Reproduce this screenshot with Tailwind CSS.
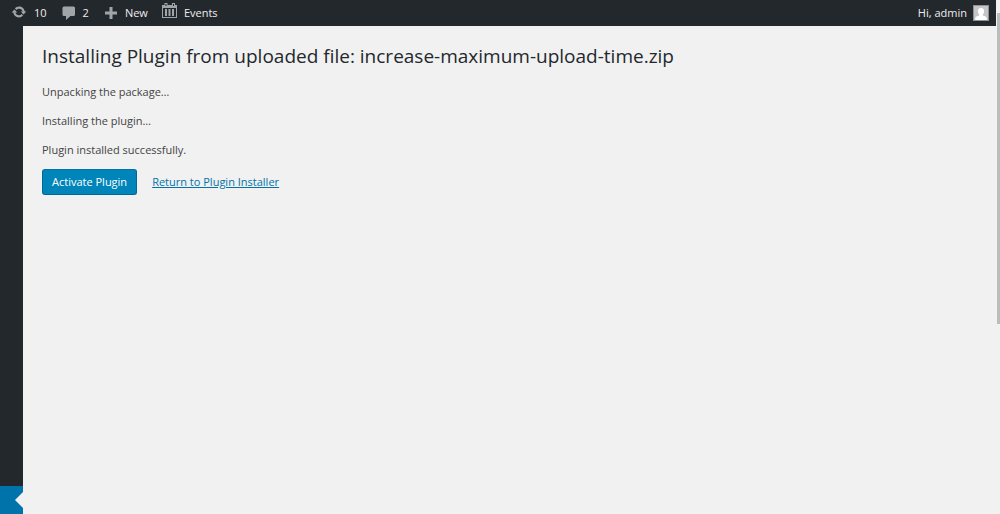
<!DOCTYPE html>
<html lang="en">
<head>
<meta charset="utf-8">
<title>Install Plugin</title>
<script src="https://cdn.jsdelivr.net/npm/@tailwindcss/browser@4"></script>
</head>
<body class="flex h-screen overflow-hidden bg-[#f1f1f1] font-['Open_Sans','Noto_Sans',sans-serif] text-[11px] text-[#444]">
<div class="flex min-w-0 flex-1 flex-col">
  <header class="flex h-[26px] shrink-0 items-center justify-between bg-[#23282d] pr-[7px] pl-[11px] text-[#eee]">
    <nav class="flex items-center gap-[14px]" aria-label="Toolbar">
      <a href="#" class="flex items-center gap-[7px]">
        <svg class="mb-0.5 h-4 w-4" viewBox="0 0 20 20" fill="#a0a5aa" aria-hidden="true">
          <path d="M10.200 3.280c3.530 0 6.430 2.610 6.920 6h2.080l-3.500 4-3.500-4h2.320c-.45-1.970-2.210-3.450-4.320-3.450-1.450 0-2.730.71-3.540 1.780L4.950 5.660C6.230 4.200 8.110 3.280 10.200 3.280zM9.800 16.720c-3.520 0-6.430-2.610-6.920-6H.8l3.500-4 3.500 4H5.480c.45 1.970 2.210 3.450 4.320 3.450 1.450 0 2.730-.71 3.540-1.780l1.710 1.950c-1.280 1.460-3.150 2.380-5.250 2.380z"/>
        </svg>
        <span>10</span>
      </a>
      <a href="#" class="flex items-center gap-1.5">
        <svg class="h-4 w-4" viewBox="0 0 16 16" fill="#a0a5aa" aria-hidden="true"><path d="M3 1.500h9.500A1.500 1.500 0 0 1 14 3v6.500a1.500 1.500 0 0 1-1.500 1.500H9.500L5 15v-4H3a1.500 1.500 0 0 1-1.500-1.500V3A1.500 1.500 0 0 1 3 1.500z"/></svg>
        <span>2</span>
      </a>
      <a href="#" class="flex items-center gap-2">
        <svg class="ml-0.5 h-3 w-3" viewBox="0 0 12 12" fill="#a0a5aa" aria-hidden="true"><path d="M4.500 0h3v4.500H12v3H7.500V12h-3V7.500H0v-3h4.500z"/></svg>
        <span>New</span>
      </a>
      <a href="#" class="flex items-center gap-1.5">
        <svg class="mb-1.5 h-4 w-4" viewBox="0 0 16 16" aria-hidden="true">
          <path fill="#a0a5aa" d="M0 3h2.500V1h3v2h4.500V1h3v2H15v13H0z"/>
          <path fill="#23282d" d="M1 6h13v9H1z"/>
          <path fill="#a0a5aa" d="M3 7h2v7H3zM6.500 7h2v7h-2zM10 7h2v7h-2z"/>
          <path fill="#23282d" d="M3.500 2h1v2h-1zM11 2h1v2h-1z"/>
        </svg>
        <span>Events</span>
      </a>
    </nav>
    <a href="#" class="flex items-center gap-1.5">
      <span>Hi, admin</span>
      <svg class="h-4 w-4" viewBox="0 0 16 16" aria-hidden="true">
        <path fill="#8d9196" d="M0 0h16v16H0z"/><path fill="#c5c5c5" d="M1 1h14v14H1z"/>
        <path fill="#fff" d="M8 3c2.200 0 3.300 1.600 3.100 3.500-.2 1.600-.8 2.500-1.300 3v1l2.700 1c1 .4 1.300 1.300 1.300 3.500H2.200c0-2.200.3-3.100 1.300-3.500l2.700-1v-1c-.5-.5-1.100-1.400-1.300-3C4.700 4.600 5.800 3 8 3z"/>
      </svg>
    </a>
  </header>
  <div class="flex min-h-0 flex-1">
    <aside class="flex w-[23px] shrink-0 flex-col justify-end bg-[#23282d]">
      <a href="#" aria-label="Plugins" class="flex h-7 items-center justify-end bg-[#0073aa]">
        <svg class="h-4 w-2" viewBox="0 0 8 16" fill="#f1f1f1" aria-hidden="true"><path d="M8 0v16L0 8z"/></svg>
      </a>
    </aside>
    <main class="min-w-0 flex-1 px-[19px] pt-4">
      <h1 class="text-[19px] leading-7 text-[#23282d]">Installing Plugin from uploaded file: increase-maximum-upload-time.zip</h1>
      <div class="mt-[13px] flex flex-col gap-3 leading-[17px]">
        <p>Unpacking the package…</p>
        <p>Installing the plugin…</p>
        <p>Plugin installed successfully.</p>
      </div>
      <div class="mt-[11px] flex items-center gap-[15px]">
        <button type="button" class="h-[26px] rounded-[3px] border border-[#006799] border-t-[#0073aa] bg-[#0085ba] px-[9px] text-white">Activate Plugin</button>
        <a href="#" class="text-[#0073aa] underline">Return to Plugin Installer</a>
      </div>
    </main>
  </div>
</div>
<div class="w-1 shrink-0 pt-[13px] pl-px" aria-hidden="true"><div class="h-[62%] bg-[#bdbdbd]"></div></div>
</body>
</html>
